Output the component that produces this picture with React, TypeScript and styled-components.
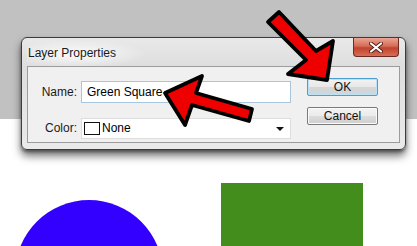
import styled, { createGlobalStyle } from 'styled-components';

const GlobalStyle = createGlobalStyle`
  html, body {
    margin: 0;
    padding: 0;
    background: #fff;
  }
  body {
    font-family: "Liberation Sans", Arial, sans-serif;
  }
`;

const Page = styled.div`
  position: relative;
  width: 417px;
  height: 246px;
  overflow: hidden;
  background: #fff;
`;

const TopBand = styled.div`
  height: 119px;
  background: #c1c1c1;
`;

const Canvas = styled.div`
  display: flex;
  align-items: flex-start;
  gap: 58px;
  padding-left: 15px;
`;

const Circle = styled.div`
  width: 148px;
  height: 148px;
  margin-top: 81px;
  border-radius: 50%;
  background: #3300ff;
  flex-shrink: 0;
`;

const GreenSquare = styled.div`
  width: 142px;
  height: 142px;
  margin-top: 64px;
  background: #438d1c;
  flex-shrink: 0;
`;

// the dialog floats over the page like a desktop window
const Window = styled.div`
  position: absolute;
  left: 21px;
  top: 37px;
  width: 373px;
  height: 105px;
  border: 1px solid #3c3c3c;
  border-radius: 6px;
  background: linear-gradient(180deg, #e9e9e9 0%, #dedede 25%, #e4e4e4 60%, #eaeaea 100%);
  box-shadow: 0 6px 8px rgba(0, 0, 0, 0.55), 0 2px 3px rgba(0, 0, 0, 0.35);
  display: flex;
  flex-direction: column;
  padding: 0 5px 6px 5px;
  box-sizing: content-box;
`;

const TitleBar = styled.div`
  height: 28px;
  display: flex;
  align-items: flex-start;
  justify-content: space-between;
  background: radial-gradient(ellipse 70px 14px at 50px 16px, rgba(255, 255, 255, 0.85), rgba(255, 255, 255, 0) 100%);
`;

const Title = styled.span`
  margin-top: 8px;
  margin-left: 1px;
  font-size: 12px;
  color: #1a1a1a;
`;

const CloseButton = styled.div`
  width: 44px;
  height: 18px;
  margin-right: 1px;
  border: 1px solid #6b2b22;
  border-top: none;
  border-radius: 0 0 4px 4px;
  background: linear-gradient(180deg, #e9a595 0%, #d66b55 45%, #c0432e 55%, #d86e55 100%);
  display: flex;
  align-items: center;
  justify-content: center;
`;

const Panel = styled.div`
  flex: 1;
  border: 1px solid #9c9c9c;
  background: #f0f0f0;
  display: flex;
  padding: 10px 11px 0 0;
  gap: 16px;
`;

const Form = styled.div`
  display: grid;
  grid-template-columns: 49px 210px;
  column-gap: 4px;
  row-gap: 8px;
  align-items: center;
`;

const Label = styled.label`
  text-align: right;
  font-size: 12px;
  color: #1a1a1a;
`;

const TextField = styled.div`
  height: 20px;
  border: 1px solid #a9c6dc;
  background: #fff;
  display: flex;
  align-items: center;
  padding-left: 5px;
  font-size: 12px;
  color: #000;
`;

const Select = styled.div`
  height: 19px;
  border: 1px solid #dedede;
  background: #fff;
  display: flex;
  align-items: center;
  padding: 0 6px 0 2px;
  gap: 2px;
  font-size: 12px;
  color: #000;
`;

const Swatch = styled.span`
  width: 14px;
  height: 11px;
  border: 1px solid #111;
  background: #fff;
`;

const SelectText = styled.span`
  flex: 1;
`;

const Caret = styled.span`
  width: 0;
  height: 0;
  border-left: 4px solid transparent;
  border-right: 4px solid transparent;
  border-top: 4px solid #111;
  margin-top: 2px;
`;

const Buttons = styled.div`
  display: flex;
  flex-direction: column;
  gap: 11px;
  padding-top: 1px;
`;

const Button = styled.div<{ $default?: boolean }>`
  width: 69px;
  height: 16px;
  border: 1px solid ${(p) => (p.$default ? '#4a9fd0' : '#7a7a7a')};
  border-radius: 2px;
  background: ${(p) =>
    p.$default
      ? 'linear-gradient(180deg, #f2f2f2 0%, #e8e8e8 48%, #d6d6d6 52%, #cfd6db 100%)'
      : 'linear-gradient(180deg, #f3f3f3 0%, #ebebeb 48%, #dcdcdc 52%, #cfcfcf 100%)'};
  box-shadow: ${(p) => (p.$default ? 'inset 0 0 0 1px #b9e2f7' : 'inset 0 0 0 1px #fbfbfb')};
  display: flex;
  align-items: center;
  justify-content: center;
  font-size: 12px;
  color: #111;
`;

const Overlay = styled.svg`
  position: absolute;
  left: 0;
  top: 0;
  pointer-events: none;
`;

const CloseIcon = () => (
  <svg width="14" height="11" viewBox="0 0 14 11">
    <path d="M2 1.5 L12 9.5 M12 1.5 L2 9.5" stroke="#5a2018" strokeWidth="4" strokeLinecap="round" />
    <path d="M2 1.5 L12 9.5 M12 1.5 L2 9.5" stroke="#fff" strokeWidth="2.2" strokeLinecap="round" />
  </svg>
);

const Arrows = () => (
  <Overlay width="417" height="246" viewBox="0 0 417 246">
    <g fill="#ee0000" stroke="#000" strokeWidth="3.8" strokeLinejoin="round">
      <polygon points="279,12 316,51 333,41 327,80 288,74 306,60 268,22" />
      <polygon points="165,93 202,76 196,93 252,109 249,121 192,105 185,125" />
    </g>
  </Overlay>
);

export default function App() {
  return (
    <Page>
      <GlobalStyle />
      <TopBand />
      <Canvas>
        <Circle />
        <GreenSquare />
      </Canvas>
      <Window>
        <TitleBar>
          <Title>Layer Properties</Title>
          <CloseButton>
            <CloseIcon />
          </CloseButton>
        </TitleBar>
        <Panel>
          <Form>
            <Label>Name:</Label>
            <TextField>Green Square</TextField>
            <Label>Color:</Label>
            <Select>
              <Swatch />
              <SelectText>None</SelectText>
              <Caret />
            </Select>
          </Form>
          <Buttons>
            <Button $default>OK</Button>
            <Button>Cancel</Button>
          </Buttons>
        </Panel>
      </Window>
      <Arrows />
    </Page>
  );
}
